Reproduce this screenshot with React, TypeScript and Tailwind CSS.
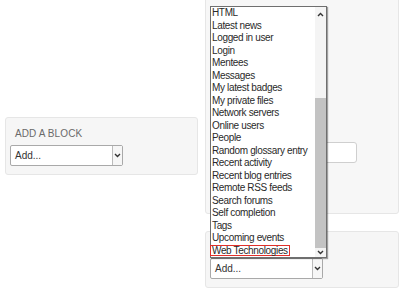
const blocks = [
  "HTML",
  "Latest news",
  "Logged in user",
  "Login",
  "Mentees",
  "Messages",
  "My latest badges",
  "My private files",
  "Network servers",
  "Online users",
  "People",
  "Random glossary entry",
  "Recent activity",
  "Recent blog entries",
  "Remote RSS feeds",
  "Search forums",
  "Self completion",
  "Tags",
  "Upcoming events",
  "Web Technologies",
];

const Chevron = ({ up = false }: { up?: boolean }) => (
  <svg width="7" height="5" viewBox="0 0 7 5" className="block">
    <polyline
      points={up ? "1,4 3.5,1.5 6,4" : "1,1 3.5,3.5 6,1"}
      fill="none"
      stroke="#333"
      strokeWidth="1.4"
    />
  </svg>
);

const Select = () => (
  <div className="flex h-[21px] w-[113px] rounded-[2px] border border-[#a9a9a9] bg-white">
    <span className="flex-1 pl-[4px] text-[10px] leading-[19px] text-[#333]">Add...</span>
    <span className="flex w-[10px] items-center justify-center border-l border-[#bbb] bg-[#f6f6f6]">
      <Chevron />
    </span>
  </div>
);

export default function App() {
  return (
    <div className="flex h-[294px] w-[402px] overflow-hidden bg-white font-['Liberation_Sans',Arial,sans-serif]">
      {/* left column */}
      <div className="w-[205px] shrink-0 pl-[5px] pt-[117px]">
        <div className="h-[58px] w-[193px] rounded-[3px] border border-[#e6e6e6] bg-[#f6f6f6]">
          <h3 className="pl-[9px] pt-[9px] text-[10px] leading-[14px] tracking-[0.1px] text-[#6a6a6a]">ADD A BLOCK</h3>
          <div className="pl-[4px] pt-[4px]">
            <Select />
          </div>
        </div>
      </div>

      {/* right column */}
      <div className="-mt-[4px] flex w-[194px] shrink-0 flex-col gap-[17px]">
        <div className="h-[218px] rounded-[3px] border border-[#e6e6e6] bg-[#f7f7f7] pl-[4px] pt-[145px]">
          <div className="h-[21px] w-[147px] rounded-[3px] border border-[#cfcfcf] bg-white" />
        </div>

        <div className="h-[57px] rounded-[3px] border border-[#e6e6e6] bg-[#f6f6f6] pl-[4px] pt-[26px]">
          <div className="relative">
            <Select />
            {/* open dropdown list */}
            <div className="absolute bottom-full left-0 w-[117px] border border-[#6f6f6f] bg-white shadow-[1px_1px_1px_rgba(0,0,0,0.35)]">
              <ul className="pr-[11px] text-[10px] tracking-[-0.35px] text-[#2a2a2a]">
                {blocks.map((b, i) =>
                  i === blocks.length - 1 ? (
                    <li key={b} className="flex h-[12.5px] items-center pl-[1px]">
                      <span className="-ml-[2px] inline-block h-[11px] border border-[#e0302a] px-[1px] leading-[9px]">
                        {b}
                      </span>
                    </li>
                  ) : (
                    <li key={b} className="h-[12.5px] whitespace-nowrap pl-[1px] leading-[12.5px]">
                      {b}
                    </li>
                  )
                )}
              </ul>
              {/* scrollbar */}
              <div className="absolute bottom-0 right-0 top-0 flex w-[11px] flex-col bg-[#f4f4f4]">
                <div className="flex h-[14px] items-center justify-center">
                  <Chevron up />
                </div>
                <div className="mt-[77px] h-[150px] bg-[#c3c3c3]" />
                <div className="flex flex-1 items-center justify-center">
                  <Chevron />
                </div>
              </div>
            </div>
          </div>
        </div>
      </div>
    </div>
  );
}
